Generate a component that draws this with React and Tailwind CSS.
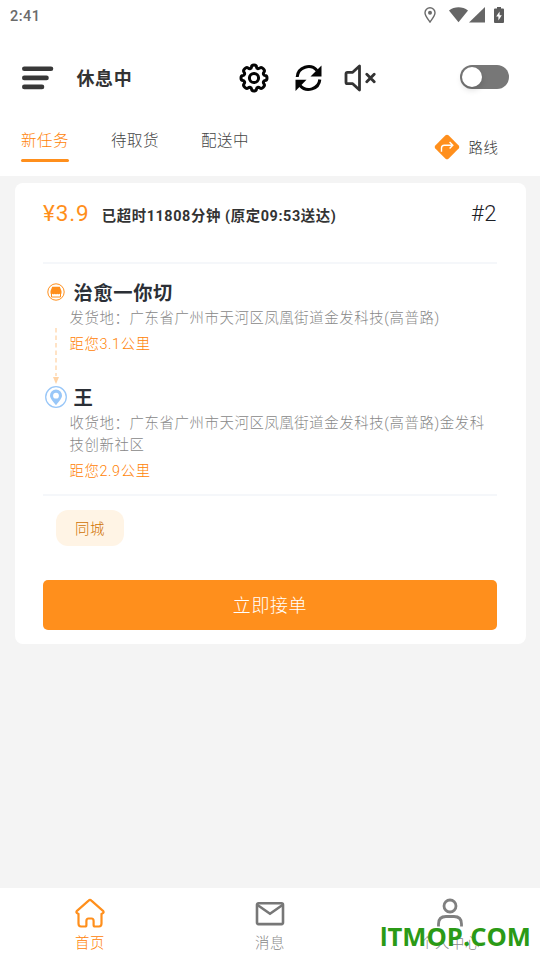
import React from "react";

const tabs = ["新任务", "待取货", "配送中"];

function StatusBar() {
  return (
    <div className="flex h-8 items-center justify-between pl-[10px] pr-[36px] text-[#6b6b6b]">
      <span className="pt-[2px] text-[14.5px] font-medium tracking-[0.5px]">2:41</span>
      <div className="flex items-center pb-[2px]">
        <svg className="mr-[13px] h-4 w-3" viewBox="0 0 12 16" fill="none">
          <path d="M6 15C4 12 1 9 1 5.8a5 5 0 0 1 10 0C11 9 8 12 6 15Z" stroke="currentColor" strokeWidth="1.4" />
          <circle cx="6" cy="5.8" r="2" fill="currentColor" />
        </svg>
        <svg className="mr-px h-4 w-[19px]" viewBox="0 0 19 16" fill="#666">
          <path d="M0 3.4C5.5-.9 13.5-.9 19 3.4L9.5 15.2Z" />
        </svg>
        <svg className="mr-[9px] h-4 w-4" viewBox="0 0 16 16" fill="#666">
          <path d="M16 0V15.5H0Z" />
        </svg>
        <svg className="h-4 w-[10px]" viewBox="0 0 10 16">
          <path d="M3 0h4v1.5h2a1 1 0 0 1 1 1V15a1 1 0 0 1-1 1H1a1 1 0 0 1-1-1V2.5a1 1 0 0 1 1-1h2Z" fill="#5c5c5c" />
          <path d="M5.6 4.5 2.2 9.6h2.2V13.5l3.4-5.2H5.6Z" fill="#fff" />
        </svg>
      </div>
    </div>
  );
}

function GearIcon() {
  return (
    <svg className="size-[30px]" viewBox="0 0 30 30" fill="none" stroke="#050505" strokeWidth="3" strokeLinejoin="round">
      <path d="M12.5 4.2Q12.5 2 15 2T17.5 4.2Q17.6 5.5 19 5.7Q20 5.7 21 4.9Q22.5 3.9 24.3 5.7T25.1 9Q24.2 10 24.4 11Q24.8 12.4 26 12.5Q28 12.5 28 15T26 17.5Q24.8 17.6 24.4 19Q24.2 20 25.1 21Q26.1 22.5 24.3 24.3T21 25.1Q20 24.2 19 24.3Q17.6 24.5 17.5 25.8Q17.5 28 15 28T12.5 25.8Q12.4 24.5 11 24.3Q10 24.2 9 25.1Q7.5 26.1 5.7 24.3T4.9 21Q5.8 20 5.6 19Q5.2 17.6 4 17.5Q2 17.5 2 15T4 12.5Q5.2 12.4 5.6 11Q5.8 10 4.9 9Q3.9 7.5 5.7 5.7T9 4.9Q10 5.8 11 5.7Q12.4 5.5 12.5 4.2Z" />
      <circle cx="15" cy="15" r="4.6" />
    </svg>
  );
}

function RefreshIcon() {
  return (
    <svg className="h-[28px] w-[27px]" viewBox="0 0 27 28" fill="none" stroke="#050505" strokeWidth="3">
      <path d="M2.2 13C3 3.2 15.5-.9 22 6.5" />
      <path d="M24.8 15.5C24 25 11.5 29 5 21.5" />
      <path d="M26.5 1.5V12.5H15.5Z" fill="#050505" stroke="none" />
      <path d="M.5 27V15.7H11.5Z" fill="#050505" stroke="none" />
    </svg>
  );
}

function MuteIcon() {
  return (
    <svg className="h-[28px] w-[32px]" viewBox="0 0 32 28" fill="none" stroke="#333" strokeWidth="2.8" strokeLinejoin="round" strokeLinecap="round">
      <path d="M15.5 2V26L8.7 19.7H3.5Q2 19.7 2 18.2V9.8Q2 8.3 3.5 8.3H8.7Z" />
      <path d="M22.8 10.2 30.2 17.8M30.2 10.2 22.8 17.8" />
    </svg>
  );
}

function Header() {
  return (
    <div className="flex h-[92px] items-center pl-[21.5px] pr-[31.5px]">
      <svg className="h-6 w-8" viewBox="0 0 32 24" stroke="#383838" strokeWidth="4.6" strokeLinecap="round">
        <path d="M2.3 2.8H29M2.3 11.9H24.5M2.3 20.9H20" />
      </svg>
      <h1 className="ml-[23px] w-[162.5px] text-[18px] font-bold tracking-[0.6px] text-[#333]">休息中</h1>
      <div className="flex items-center">
        <GearIcon />
        <div className="ml-[26px]"><RefreshIcon /></div>
        <div className="ml-[22px]"><MuteIcon /></div>
      </div>
      <div className="mb-[3px] ml-auto flex h-6 w-[49px] items-center rounded-full bg-[#777] pl-[2px]">
        <span className="size-5 rounded-full bg-white shadow-[0_3px_6px_rgba(0,0,0,0.15)]" />
      </div>
    </div>
  );
}

function TabBar() {
  return (
    <div className="flex h-[52px] pl-[21px] pr-[41.5px]">
      {tabs.map((tab, i) => (
        <div key={tab} className="mr-[42px] flex flex-col">
          <span
            className={
              i === 0
                ? "h-[35px] text-[15.5px] font-light leading-[34px] tracking-[0.5px] text-[#ff8205]"
                : "h-[35px] text-[15.5px] font-light leading-[34px] tracking-[0.5px] text-[#444]"
            }
          >
            {tab}
          </span>
          {i === 0 && <span className="h-[3px] rounded-full bg-[#ff8f1c]" />}
        </div>
      ))}
      <div className="ml-auto flex h-[46px] items-center">
        <svg className="size-[26px]" viewBox="0 0 26 26">
          <path d="M11.5 1.3Q13 0 14.5 1.3L24.7 11.5Q26 13 24.7 14.5L14.5 24.7Q13 26 11.5 24.7L1.3 14.5Q0 13 1.3 11.5Z" fill="#ff8f1c" />
          <path d="M7.5 17.8V14Q7.5 11.2 10.3 11.2H18.5M15.6 8 18.8 11.2 15.6 14.4" fill="none" stroke="#fff" strokeWidth="1.4" />
        </svg>
        <span className="ml-[9px] pt-[3px] text-[14.4px] font-light tracking-[0.6px] text-[#333]">路线</span>
      </div>
    </div>
  );
}

function ShopIcon() {
  return (
    <svg className="size-[18px]" viewBox="0 0 18 18">
      <circle cx="9" cy="9" r="8.2" fill="none" stroke="#ff8f1c" />
      <path d="M5.2 3.8h7.6L14.5 8v2.5q-1 1.2-2 .3-1.2 1-2.3 0-1.2 1-2.4 0-1.2 1-2.3 0-1 .9-2-.3V8Z" fill="#ff8f1c" />
      <path d="M4.5 9.5V14H13.5V9.5" fill="none" stroke="#ff8f1c" />
    </svg>
  );
}

function PinIcon() {
  return (
    <svg className="size-[22px]" viewBox="0 0 22 22">
      <circle cx="11" cy="11" r="10.3" fill="none" stroke="#99c7f8" strokeWidth="1.3" />
      <path d="M11 19.3C8.5 15.7 5 12.5 5 9.5a6 6 0 0 1 12 0C17 12.5 13.5 15.7 11 19.3Z" fill="#99c7f8" />
      <circle cx="11" cy="9.7" r="2.9" fill="#fff" />
    </svg>
  );
}

function Stop({ name, address, distance }) {
  return (
    <div className="w-[424px] tracking-[0.6px]">
      <h2 className="pl-[4.5px] text-[19.3px] font-bold leading-[28px] text-[#2b2f36]">{name}</h2>
      <p className="pl-[0.5px] text-[14.4px] font-light leading-[22px] text-[#888]">{address}</p>
      <p className="mt-[3.5px] pl-[0.5px] text-[14.4px] font-light leading-[22px] text-[#ff8205]">{distance}</p>
    </div>
  );
}

function OrderCard() {
  return (
    <div className="mx-[14.5px] mt-[7px] h-[461px] rounded-lg bg-white px-[28.5px] pt-[17px]">
      <div className="flex h-[62px] items-start">
        <span className="text-[22.5px] leading-[27px] tracking-[0.9px] text-[#ff8f1c]">¥3.9</span>
        <span className="ml-[12px] pt-[6px] text-[14.4px] font-bold leading-[22px] tracking-[0.6px] text-[#333]">
          已超时11808分钟 (原定09:53送达)
        </span>
        <span className="ml-auto text-[22px] font-light leading-[27px] tracking-[0.5px] text-[#1c2026]">#2</span>
      </div>
      <div className="flex h-[234px] border-y-2 border-[#f5f7fa] pt-[14px]">
        <div className="flex w-[26px] flex-col items-center pt-[5px]">
          <ShopIcon />
          <svg className="mb-[2px] mt-[27px] h-[56px] w-[6px]" viewBox="0 0 6 56">
            <path d="M3 0V48" stroke="#ffdcb8" strokeWidth="1.6" strokeDasharray="4.5 3" />
            <path d="M0 49H6L3 56Z" fill="#ffd3a5" />
          </svg>
          <PinIcon />
        </div>
        <div className="flex flex-col gap-[29.5px] pt-[2px]">
          <Stop name="治愈一你切" address="发货地：广东省广州市天河区凤凰街道金发科技(高普路)" distance="距您3.1公里" />
          <Stop name="王" address="收货地：广东省广州市天河区凤凰街道金发科技(高普路)金发科技创新社区" distance="距您2.9公里" />
        </div>
      </div>
      <div className="ml-[13px] mt-[14px] flex h-9 w-[68px] items-center justify-center rounded-xl bg-[#fff4e5] pt-[3px] text-[14.4px] font-light tracking-[0.6px] text-[#cf7200]">
        同城
      </div>
      <button className="mt-[33.5px] flex h-[50.5px] w-full items-center justify-center rounded-[5px] bg-[#ff8f1c] pt-px text-[18px] font-light tracking-[0.6px] text-white">
        立即接单
      </button>
    </div>
  );
}

function BottomNav() {
  return (
    <nav className="relative grid h-[72px] grid-cols-3 bg-white text-[14.4px] font-light leading-[20px] tracking-[0.6px] text-[#888]">
      <div className="flex flex-col items-center pt-[10px] text-[#ff8205]">
        <svg className="mb-[5px] h-[31px] w-[30px]" viewBox="0 0 30 31" fill="none" stroke="#ff8f1c" strokeWidth="2.2" strokeLinejoin="round">
          <path d="M13.6 2.6Q15 1.3 16.4 2.6L28 12.8Q29.5 14.5 27.2 15.5L26.5 15.7V25.5Q26.5 28.5 24 28.5H20Q18.6 28.5 18.6 27V23Q18.6 20.5 16.5 20.5H13.5Q11.4 20.5 11.4 23V27Q11.4 28.5 10 28.5H6Q3.5 28.5 3.5 25.5V15.7L2.8 15.5Q.5 14.5 2 12.8Z" />
        </svg>
        首页
      </div>
      <div className="flex flex-col items-center pt-[10px]">
        <svg className="mb-[5px] h-[31px] w-[30px]" viewBox="0 0 30 31" fill="none" stroke="#777" strokeWidth="2.6" strokeLinejoin="round">
          <rect x="2" y="5.3" width="26" height="20.8" rx="1.5" />
          <path d="M2.5 7 15 15.800 27.500 7" />
        </svg>
        消息
      </div>
      <div className="flex flex-col items-center pt-[10px]">
        <svg className="mb-[5px] h-[31px] w-[30px]" viewBox="0 0 30 31" fill="none" stroke="#808080" strokeWidth="2.8">
          <circle cx="15" cy="8" r="6" />
          <path d="M3.500 28.500V26Q3.500 18.500 11 18.500H19Q26.500 18.500 26.500 26V28.500" />
        </svg>
        个人中心
      </div>
      <span className="absolute bottom-[7px] right-[9px] font-['Open_Sans',sans-serif] text-[25.6px] font-bold leading-[32px] tracking-normal text-[#2b9a16]">
        <span className="font-[Roboto,sans-serif]">I</span>TMOP.COM
      </span>
    </nav>
  );
}

export default function App() {
  return (
    <div className="flex h-[960px] w-[540px] flex-col overflow-hidden bg-[#f4f4f4] font-[Roboto,'Noto_Sans_CJK_SC',sans-serif]">
      <header className="h-[176px] bg-white">
        <StatusBar />
        <Header />
        <TabBar />
      </header>
      <main className="flex-1">
        <OrderCard />
      </main>
      <BottomNav />
    </div>
  );
}
